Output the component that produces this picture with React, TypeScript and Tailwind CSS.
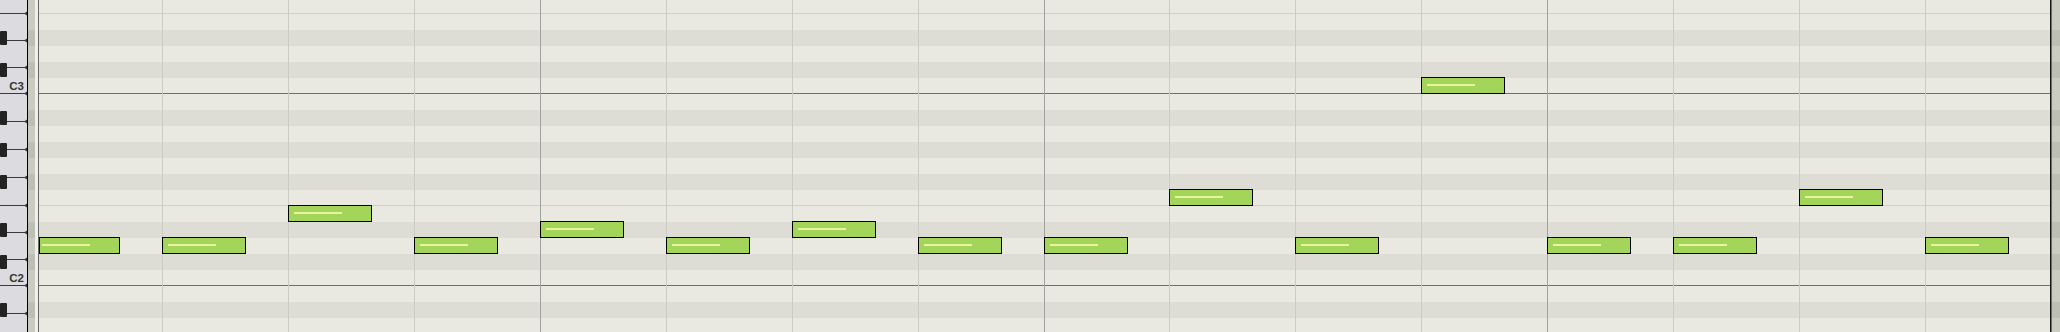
import React from 'react';

type Row = { name: string; black: boolean; line?: 'oct' | 'ef' };

// visible pitch rows, top to bottom (first row starts 2px above the page)
const ROWS: Row[] = [
  { name: 'F3', black: false, line: 'ef' },
  { name: 'E3', black: false },
  { name: 'D#3', black: true },
  { name: 'D3', black: false },
  { name: 'C#3', black: true },
  { name: 'C3', black: false, line: 'oct' },
  { name: 'B2', black: false },
  { name: 'A#2', black: true },
  { name: 'A2', black: false },
  { name: 'G#2', black: true },
  { name: 'G2', black: false },
  { name: 'F#2', black: true },
  { name: 'F2', black: false, line: 'ef' },
  { name: 'E2', black: false },
  { name: 'D#2', black: true },
  { name: 'D2', black: false },
  { name: 'C#2', black: true },
  { name: 'C2', black: false, line: 'oct' },
  { name: 'B1', black: false },
  { name: 'A#1', black: true },
  { name: 'A1', black: false },
];

const NOTES = ['D2', 'D2', 'E2', 'D2', 'D#2', 'D2', 'D#2', 'D2', 'D2', 'F2', 'D2', 'C3', 'D2', 'D2', 'F2', 'D2'];

const GRID_X = 39;
const beatX = (k: number) => Math.round(36.07 + 125.93 * k);
const rowTop = (i: number) => -2 + 16 * i;

// white key boundaries on the keyboard
const KEY_LINES = [13, 40, 67, 93, 121, 149, 177, 205, 232, 259, 285, 313];

const Keyboard: React.FC = () => (
  <div className="relative w-[27px] h-full bg-[#dcdce0] shrink-0">
    <svg className="absolute inset-0" width={27} height={332}>
      {KEY_LINES.map((y) => (
        <g key={y}>
          <line x1={0} x2={26} y1={y + 0.5} y2={y + 0.5} stroke="#3a3a3a" strokeWidth={1} />
          <polygon points={`${24},${y + 0.5} ${27},${y - 1.5} ${27},${y + 2.5}`} fill="#3a3a3a" />
        </g>
      ))}
      {ROWS.map((r, i) =>
        r.black ? <rect key={r.name} x={0} y={rowTop(i) + 1} width={7} height={14} rx={1} fill="#232323" /> : null
      )}
    </svg>
    <div className="relative flex flex-col -mt-[2px]">
      {ROWS.map((r) => (
        <div key={r.name} className="h-4 flex items-center justify-end pr-[3px] pt-[2px]">
          {r.line === 'oct' && (
            <span className="text-[11.5px] leading-none font-bold text-[#353535] font-['Liberation_Sans',Arial,sans-serif]">
              {r.name}
            </span>
          )}
        </div>
      ))}
    </div>
  </div>
);

const SideStrip: React.FC<{ w: string }> = ({ w }) => (
  <div className={`${w} h-full shrink-0 overflow-hidden`}>
    <div className="flex flex-col -mt-[2px]">
      {ROWS.map((r) => (
        <div key={r.name} className={`h-4 ${r.black ? 'bg-[#bebfb4]' : 'bg-[#cacbc1]'}`} />
      ))}
    </div>
  </div>
);

const Note: React.FC<{ k: number; pitch: string }> = ({ k, pitch }) => {
  const i = ROWS.findIndex((r) => r.name === pitch);
  const x = beatX(k);
  const left = Math.max(x, GRID_X) - GRID_X;
  const width = x + 84 - Math.max(x, GRID_X);
  const hl = x + 6 - Math.max(x, GRID_X) - 1;
  return (
    <div
      className="absolute h-[17px] bg-[#a2d55a] border border-black"
      style={{ left, top: rowTop(i) - 1, width }}
    >
      <div className="absolute top-[6px] h-[2px] w-[48px] bg-[#e8f59c]" style={{ left: Math.max(hl, 2) }} />
    </div>
  );
};

const Grid: React.FC = () => (
  <div className="relative flex-1 h-full overflow-hidden">
    <div className="flex flex-col -mt-[2px]">
      {ROWS.map((r) => (
        <div
          key={r.name}
          className={`h-4 ${r.black ? 'bg-[#dddcd5]' : 'bg-[#e9e9e2]'} ${
            r.line === 'oct' ? 'border-b border-[#6f6f6b]' : r.line === 'ef' ? 'border-b border-[#d0d0c9]' : ''
          }`}
        />
      ))}
    </div>
    {Array.from({ length: 15 }, (_, j) => j + 1).map((k) => (
      <div
        key={k}
        className={`absolute top-0 bottom-0 w-px ${k % 4 === 0 ? 'bg-[#a3a39e]' : 'bg-[#cbcbc4]'}`}
        style={{ left: beatX(k) - GRID_X }}
      />
    ))}
    {NOTES.map((p, k) => (
      <Note key={k} k={k} pitch={p} />
    ))}
  </div>
);

export default function App() {
  return (
    <div className="flex w-[2060px] h-[332px] overflow-hidden bg-[#e9e9e2]">
      <Keyboard />
      <div className="w-px h-full bg-black shrink-0" />
      <SideStrip w="w-[7px]" />
      <div className="w-[3px] h-full bg-[#f0f0ea] shrink-0" />
      <div className="w-px h-full bg-[#666662] shrink-0" />
      <Grid />
      <div className="w-px h-full bg-[#161616] shrink-0" />
      <div className="w-px h-full bg-[#3d8f2c] shrink-0" />
      <SideStrip w="w-[8px]" />
    </div>
  );
}
